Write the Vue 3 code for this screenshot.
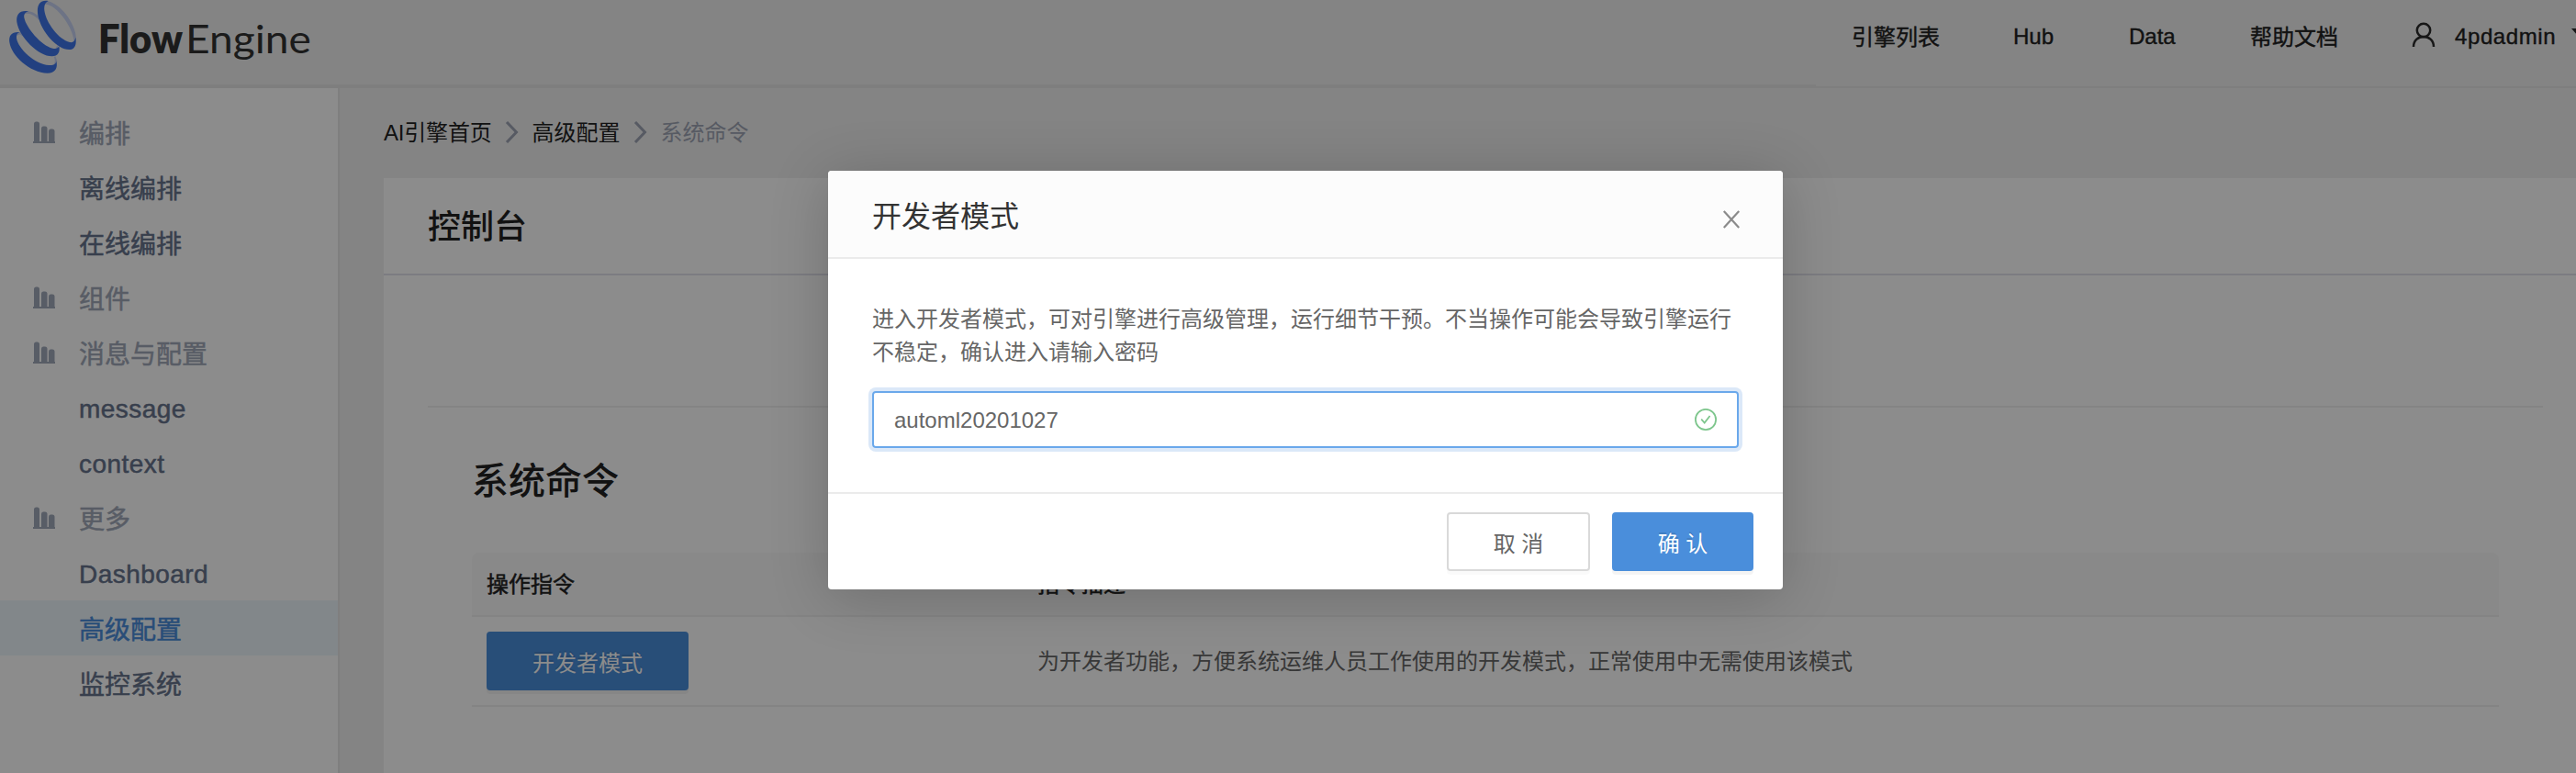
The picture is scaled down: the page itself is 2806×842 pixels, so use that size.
<script setup>
const links = [
  { label: '引擎列表', cls: 'engine cjk' },
  { label: 'Hub', cls: 'hub' },
  { label: 'Data', cls: 'data' },
  { label: '帮助文档', cls: 'docs cjk' },
]

const menu = [
  { label: '编排', group: true },
  { label: '离线编排' },
  { label: '在线编排' },
  { label: '组件', group: true },
  { label: '消息与配置', group: true },
  { label: 'message', latin: true },
  { label: 'context', latin: true },
  { label: '更多', group: true },
  { label: 'Dashboard', latin: true },
  { label: '高级配置', active: true },
  { label: '监控系统' },
]
</script>

<template>
  <div class="app">
    <header class="header">
      <svg class="logo" width="360" height="84" viewBox="0 0 360 84">
        <g transform="scale(.33333)">
          <path class="ring-light" d="M60 105 C70 104 76 108 82 116 L72 118 C68 112 62 112 54 118 Z M181 184 L187 200 L183 214 L174 212 C182 204 180 194 176 186 Z" />
          <path class="ring-blue" d="M64 105 C38 103 28 116 31 138 C37 182 98 238 155 239 C180 239 190 222 184 200 C182 210 175 214 160 213 C115 210 60 160 54 125 C53 115 56 108 64 105 Z" />
          <path class="ring-light" d="M88 36 C102 36 114 42 128 54 L128 66 C112 50 96 40 80 46 Z M187 148 L194 158 L190 166 L182 158 Z" />
          <path class="ring-blue" d="M94 37 C65 32 52 46 55 72 C62 120 125 184 170 184 C190 184 197 170 193 151 C189 159 182 160 172 158 C135 150 85 90 79 58 C77 46 84 39 94 37 Z" />
          <path class="ring-light" d="M147 3 C192 2 250 78 249 128 L242 142 C244 96 186 14 148 14 Z" />
          <path class="ring-blue" d="M158 3 C128 -2 119 20 124 50 C135 104 187 162 226 162 C245 162 251 145 247 122 C245 134 239 140 228 138 C192 130 150 74 145 34 C143 18 148 7 158 3 Z" />
        </g>
        <text class="flow" x="107" y="58" textLength="92" lengthAdjust="spacingAndGlyphs">Flow</text>
        <text class="engine-word" x="202" y="58" textLength="137" lengthAdjust="spacingAndGlyphs">Engine</text>
      </svg>
      <nav class="nav">
        <a v-for="link in links" :key="link.label" :class="link.cls">{{ link.label }}</a>
        <svg class="user" width="26" height="28" viewBox="0 0 26 28" fill="none">
          <circle cx="13" cy="9" r="7.2" />
          <path d="M2 27 C2 20 7 16 13 16 C19 16 24 20 24 27" />
        </svg>
        <span class="name">4pdadmin</span>
        <svg class="caret" width="14" height="8" viewBox="0 0 14 8"><path d="M0 0H14L7 8Z" /></svg>
      </nav>
    </header>
    <div class="rule"><div class="rule-left"></div></div>

    <div class="body">
      <aside class="sidebar">
        <div v-for="item in menu" :key="item.label" class="item" :class="{ group: item.group, active: item.active, latin: item.latin }">
          <span class="slot">
            <svg v-if="item.group" width="24" height="24" viewBox="0 0 24 24">
              <path d="M0 22H1V3Q1 .5 3.5 .5H4.500Q7 .5 7 3V22H9V8Q9 5.500 11 5.500H13Q15.500 5.500 15.500 8V22H17V11Q17 8.500 19 8.500H21Q23.500 8.500 23.500 11V22H24V24H0Z" />
            </svg>
          </span>
          <span>{{ item.label }}</span>
        </div>
      </aside>

      <main class="main">
        <div class="crumbs">
          <span class="home">AI引擎首页</span>
          <svg width="44" height="24" viewBox="0 0 44 24"><path d="M17 1L27.500 12L17 23" /></svg>
          <span>高级配置</span>
          <svg width="44" height="24" viewBox="0 0 44 24"><path d="M17 1L27.500 12L17 23" /></svg>
          <span class="current">系统命令</span>
        </div>
        <section class="card">
          <h1>控制台</h1>
          <div class="card-body">
            <div class="blank"></div>
            <div class="commands">
              <h2>系统命令</h2>
              <div class="row head">
                <div class="cell">操作指令</div>
                <div>指令描述</div>
              </div>
              <div class="row data-row">
                <div class="cell"><button class="btn primary wide">开发者模式</button></div>
                <div class="desc">为开发者功能，方便系统运维人员工作使用的开发模式，正常使用中无需使用该模式</div>
              </div>
            </div>
          </div>
        </section>
      </main>
    </div>

    <div class="mask">
      <div class="modal">
        <div class="modal-head">
          <span>开发者模式</span>
          <svg width="20" height="20" viewBox="0 0 20 20"><path d="M1.800 1L18.200 19M18.200 1L1.800 19" /></svg>
        </div>
        <div class="modal-body">
          <p>进入开发者模式，可对引擎进行高级管理，运行细节干预。不当操作可能会导致引擎运行不稳定，确认进入请输入密码</p>
          <div class="input">
            <span>automl20201027</span>
            <svg width="24" height="24" viewBox="0 0 24 24"><circle cx="12" cy="12" r="11.100" /><path d="M7.200 11.700L10.700 15.500L16.600 8" /></svg>
          </div>
        </div>
        <div class="modal-foot">
          <button class="btn cancel">取 消</button>
          <button class="btn primary ok">确 认</button>
        </div>
      </div>
    </div>
  </div>
</template>

<style>
html, body { margin: 0; overflow: hidden; }
</style>

<style scoped>
* { box-sizing: border-box; }
.app {
  position: relative;
  display: flex;
  flex-direction: column;
  width: 2806px;
  height: 842px;
  overflow: hidden;
  background: #f1f1f1;
  font-family: "Liberation Sans", "Noto Sans CJK SC", sans-serif;
  font-size: 24px;
  color: #222;
}
.header { display: flex; justify-content: space-between; height: 92px; flex: none; }
.logo { flex: none; }
.ring-blue { fill: #3e76ea; }
.ring-light { fill: #c6d2f2; }
.flow, .engine-word { font-family: Lato, sans-serif; font-size: 43px; fill: #323232; }
.flow { font-weight: 800; }
.engine-word { font-weight: 400; }
.nav { display: flex; align-items: center; height: 80px; width: 789px; flex: none; overflow: hidden; white-space: nowrap; -webkit-text-stroke: .4px #222; }
.nav > * { flex: none; }
.engine { width: 176px; }
.hub { width: 126px; }
.data { width: 132px; }
.docs { width: 176px; }
.cjk { padding-bottom: 4px; }
.user { stroke: #2a2a2a; stroke-width: 2.500; margin-top: -4px; }
.name { margin-left: 21px; width: 127px; letter-spacing: .6px; }
.caret { fill: #2a2a2a; margin-top: -10px; }
.rule { flex: none; height: 4px; border-bottom: 2px solid #e6e6e6; }
.rule-left { height: 2px; width: 1978px; background: #e6e6e6; }
.body { display: flex; flex: 1; min-height: 0; }
.sidebar { width: 370px; flex: none; padding-top: 18px; background: #fff; border-right: 2px solid #e8e8e8; }
.item { display: flex; align-items: center; height: 60px; padding-left: 36px; font-size: 28px; color: #66738c; -webkit-text-stroke: .5px; }
.slot { width: 50px; display: flex; }
.item svg { fill: #a0aabb; }
.item.latin { letter-spacing: .45px; padding-top: 3px; }
.item.group { color: #a0a8b8; }
.item.active { color: #4a8cda; background: #edf6fb; }
.main { flex: 1; min-width: 0; padding-left: 48px; display: flex; flex-direction: column; }
.crumbs { display: flex; align-items: center; height: 98px; flex: none; padding-bottom: 2px; }
.crumbs span { padding-bottom: 4px; }
.home { letter-spacing: -.2px; }
.crumbs svg { fill: none; stroke: #9ea5b4; stroke-width: 3; }
.crumbs .current { color: #9ea5b4; }
.card { flex: 1; background: #fff; }
h1, h2 { margin: 0; font-weight: 500; color: #222; }
h1 { height: 106px; padding-left: 48px; line-height: 108px; font-size: 36px; border-bottom: 2px solid #e2e2ec; }
.card-body { padding: 0 36px 0 48px; }
.blank { height: 144px; border-bottom: 2px solid #f0f0f0; }
.commands { padding: 0 48px; }
h2 { height: 158px; line-height: 161px; font-size: 40px; }
.row { display: flex; align-items: center; border-bottom: 2px solid #f0f0f0; color: #666; }
.cell { width: 600px; margin-left: 16px; flex: none; }
.head { height: 70px; padding-bottom: 4px; background: #fafafa; color: #222; -webkit-text-stroke: .5px; border-radius: 8px 8px 0 0; }
.data-row { height: 98px; }
.desc { padding-bottom: 3px; }
.btn { display: block; height: 64px; padding: 0; font: inherit; border: 2px solid #d9d9d9; border-radius: 4px; background: #fff; color: #666; box-shadow: 0 4px 0 rgba(0, 0, 0, .02); }
.primary { border-color: #4a8edb; background: #4a8edb; color: #fff; text-shadow: 0 -2px 0 rgba(0, 0, 0, .12); box-shadow: 0 4px 0 rgba(0, 0, 0, .045); }
.wide { width: 220px; }
.mask { position: absolute; inset: 0; background: rgba(0, 0, 0, .45); padding: 186px 0 0 902px; }
.modal { width: 1040px; height: 456px; display: flex; flex-direction: column; border-radius: 4px; overflow: hidden; background: #fff; color: #666; box-shadow: 0 8px 64px rgba(0, 0, 0, .2); }
.modal-head { height: 96px; flex: none; display: flex; justify-content: space-between; align-items: center; padding: 0 46px 0 48px; background: #fcfcfc; border-bottom: 2px solid #ebebeb; font-size: 32px; color: #333; }
.modal-head svg { stroke: #8b8b8b; stroke-width: 2.200; margin-top: 12px; }
.modal-body { flex: 1; padding: 48px 48px 0; }
p { margin: 0 0 24px; line-height: 36px; }
.input { display: flex; justify-content: space-between; align-items: center; height: 62px; padding: 0 22px; border: 2px solid #6aa8eb; border-radius: 4px; box-shadow: 0 0 0 4px #dbe8f8; }
.input svg { fill: none; stroke: #7ec68d; stroke-width: 1.800; }
.input span { padding-top: 2px; }
.modal-foot { height: 106px; flex: none; display: flex; justify-content: flex-end; gap: 24px; padding: 20px 32px 0 0; border-top: 2px solid #ebebeb; }
.cancel { width: 156px; }
.ok { width: 154px; }
</style>
